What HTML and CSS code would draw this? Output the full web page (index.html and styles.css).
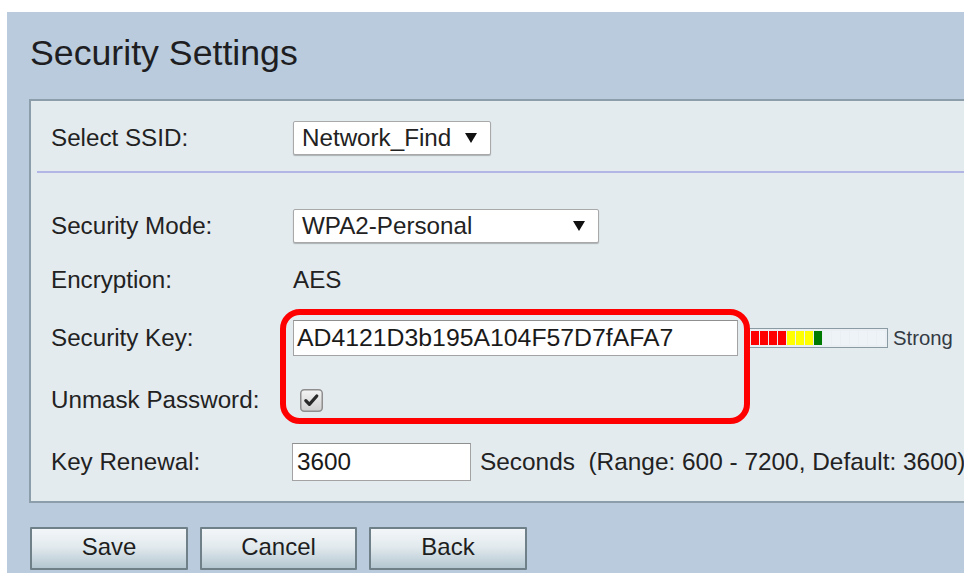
FILE: index.html
```html
<!DOCTYPE html>
<html lang="en">
<head>
<meta charset="utf-8">
<title>Security Settings</title>
<link rel="stylesheet" href="styles.css">
</head>
<body>
<div class="page">
  <h1 class="title">Security Settings</h1>

  <div class="panel">
    <div class="row row-ssid">
      <label class="label">Select SSID:</label>
      <div class="select select-ssid"><span>Network_Find</span><i class="caret"></i></div>
    </div>

    <div class="divider"></div>

    <div class="row row-mode">
      <label class="label">Security Mode:</label>
      <div class="select select-mode"><span>WPA2-Personal</span><i class="caret"></i></div>
    </div>

    <div class="row row-enc">
      <span class="label">Encryption:</span>
      <span class="value">AES</span>
    </div>

    <div class="row row-key">
      <label class="label">Security Key:</label>
      <div class="field field-key">AD4121D3b195A104F57D7fAFA7</div>
      <div class="meter">
        <span class="seg red"></span><span class="seg red"></span><span class="seg red"></span><span class="seg red"></span>
        <span class="seg yellow"></span><span class="seg yellow"></span><span class="seg yellow"></span>
        <span class="seg green"></span>
        <span class="seg"></span><span class="seg"></span><span class="seg"></span><span class="seg"></span><span class="seg"></span><span class="seg"></span><span class="seg"></span>
      </div>
      <span class="meter-text">Strong</span>
    </div>

    <div class="row row-unmask">
      <label class="label">Unmask Password:</label>
      <svg class="checkbox" width="23" height="23" viewBox="0 0 23 23">
        <defs>
          <linearGradient id="cbfill" x1="0" y1="0" x2="0" y2="1">
            <stop offset="0" stop-color="#f4f4f4"/>
            <stop offset="1" stop-color="#d0d0d0"/>
          </linearGradient>
        </defs>
        <rect x="0.75" y="0.75" width="21.5" height="21.5" rx="3.5" fill="url(#cbfill)" stroke="#8e8e8e" stroke-width="1.5"/>
        <path d="M5.8 11.6 L9.4 15.4 L16.8 7" fill="none" stroke="#2a2a2a" stroke-width="3.2" stroke-linecap="round" stroke-linejoin="round"/>
      </svg>
    </div>

    <div class="row row-renew">
      <label class="label">Key Renewal:</label>
      <div class="field field-renew">3600</div>
      <span class="hint">Seconds&nbsp; (Range: 600 - 7200, Default: 3600)</span>
    </div>

    <div class="callout"></div>
  </div>

  <div class="actions">
    <button class="btn btn-save">Save</button>
    <button class="btn btn-cancel">Cancel</button>
    <button class="btn btn-back">Back</button>
  </div>
</div>
</body>
</html>
```

FILE: styles.css
```css
html, body {
  margin: 0;
  padding: 0;
  background: #ffffff;
  overflow: hidden;
}

body {
  width: 964px;
  height: 573px;
  font-family: "Liberation Sans", Arial, sans-serif;
  color: #222222;
}

.page {
  margin: 12px 0 0 7px;
  height: 561px;
  background: #b9cbdd;
  overflow: hidden;
}

.title {
  margin: 0;
  padding: 21px 0 0 23px;
  height: 40px;
  line-height: 40px;
  font-size: 35.7px;
  font-weight: normal;
  color: #1e1e22;
}

.panel {
  position: relative;
  margin: 26px -60px 0 22px;
  padding: 20px 0 20px 0;
  border: 2px solid #8c9ea9;
  background: #e4ebef;
}

.row {
  display: flex;
  align-items: center;
  padding-left: 20px;
  font-size: 24.2px;
}

.label {
  width: 241px;
  flex: none;
}

.row-ssid { height: 34px; }
.row-mode { height: 34px; margin-top: 36px; }
.row-enc { height: 34px; margin-top: 20px; }
.row-key { height: 36px; margin-top: 23px; }
.row-unmask { height: 34px; margin-top: 27px; }
.row-renew { height: 38px; margin-top: 26px; }

.divider {
  margin: 16px 0 0 6px;
  height: 2px;
  background: #b2b6e4;
}

.select {
  box-sizing: border-box;
  height: 34px;
  display: flex;
  align-items: center;
  justify-content: space-between;
  padding: 0 13px 0 8px;
  background: #ffffff;
  border: 1px solid #a9a9a9;
  border-radius: 2px;
  box-shadow: 0 1px 1px rgba(0, 0, 0, 0.25);
  font-size: 24.2px;
}

.select-ssid { width: 198px; margin-left: 1px; }
.select-mode { width: 306px; margin-left: 1px; }

.caret {
  width: 0;
  height: 0;
  border-left: 6px solid transparent;
  border-right: 6px solid transparent;
  border-top: 10px solid #111111;
}

.value {
  margin-left: 1px;
  font-size: 24.2px;
}

.field {
  box-sizing: border-box;
  display: flex;
  align-items: center;
  background: #ffffff;
  border: 1px solid #a3a3a3;
  border-top-color: #8f8f8f;
  font-size: 24.3px;
  color: #1a1a1a;
}

.field-key {
  width: 445px;
  height: 36px;
  margin-left: 1px;
  padding-left: 3px;
  font-size: 24.8px;
}

.field-renew {
  width: 179px;
  height: 38px;
  padding-left: 4px;
}

.meter {
  box-sizing: border-box;
  width: 140px;
  height: 20px;
  margin-left: 10px;
  padding: 2px 2px;
  display: flex;
  gap: 1.5px;
  border: 1px solid #8b9ba3;
  background: #e9eff3;
}

.seg {
  width: 7.5px;
  height: 14px;
  background: #eef3f7;
  flex: none;
}

.seg.red { background: #ff0000; }
.seg.yellow { background: #ffff00; }
.seg.green { background: #007a00; }

.meter-text {
  margin-left: 5px;
  font-size: 20.3px;
  color: #333a44;
}

.checkbox {
  margin-left: 8px;
  display: block;
}

.hint {
  margin-left: 9px;
  font-size: 24.4px;
  white-space: nowrap;
}

.callout {
  position: absolute;
  left: 249px;
  top: 208px;
  width: 470px;
  height: 115px;
  box-sizing: border-box;
  border: 6px solid #ff0000;
  border-radius: 20px;
  pointer-events: none;
}

.actions {
  display: flex;
  gap: 12px;
  margin: 24px 0 0 23px;
}

.btn {
  box-sizing: border-box;
  width: 158px;
  height: 43px;
  margin: 0;
  padding: 0 0 3px 0;
  font-family: "Liberation Sans", Arial, sans-serif;
  font-size: 24px;
  color: #1e1e1e;
  border: 2px solid #6f8088;
  border-radius: 1px;
  background: linear-gradient(#f3f6f8 0%, #e2eaee 45%, #b4c7d1 100%);
}

.btn-cancel { width: 157px; }
```
